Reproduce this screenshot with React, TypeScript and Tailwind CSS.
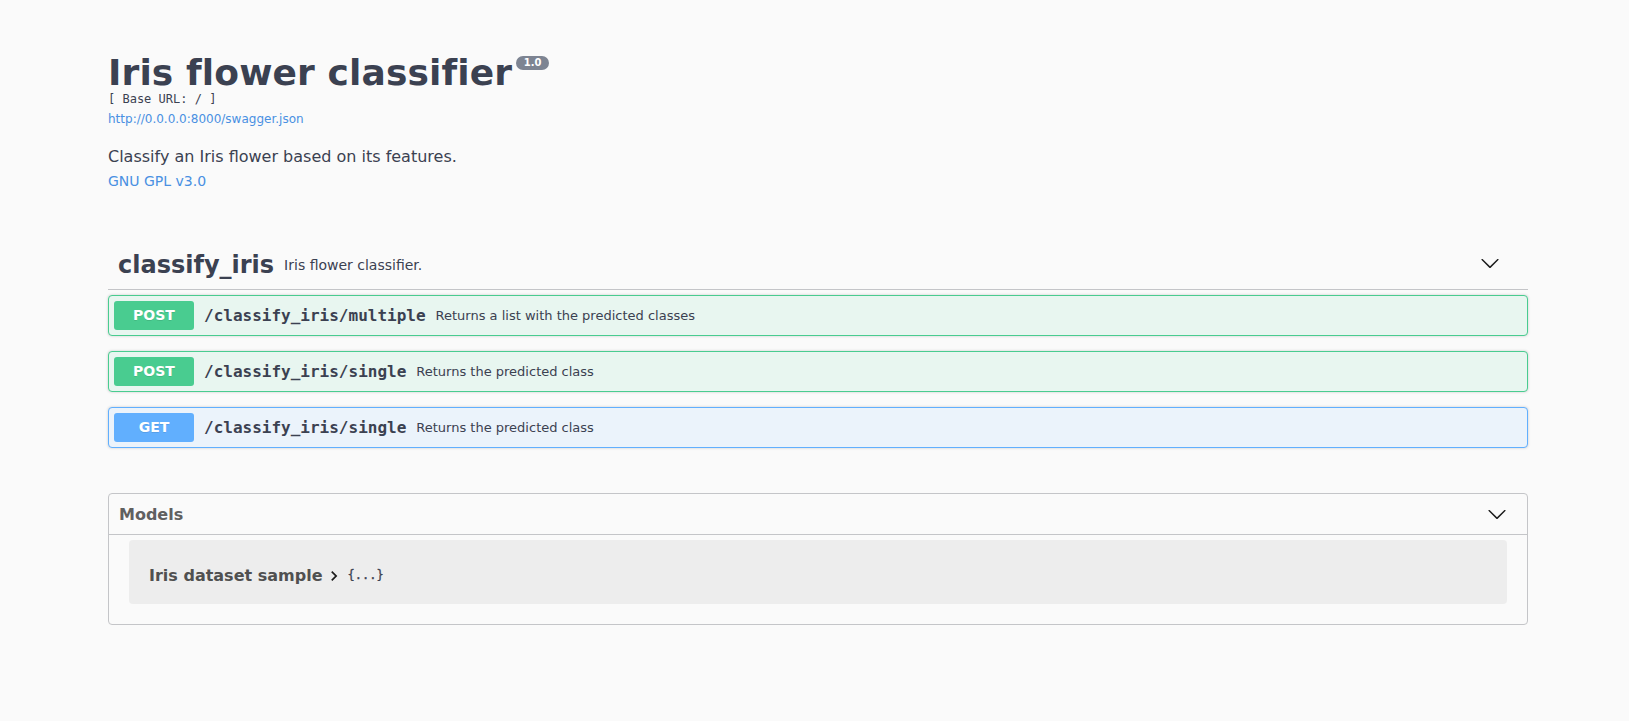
import React from "react";

const SANS = { fontFamily: '"DejaVu Sans", sans-serif' } as const;

function Arrow({ className = "" }: { className?: string }) {
  return (
    <svg width="20" height="20" viewBox="0 0 20 20" className={className} aria-hidden="true">
      <path
        fill="#1b1b1b"
        d="M17.418 6.109c.272-.268.709-.268.979 0s.271.701 0 .969l-7.908 7.83c-.27.268-.707.268-.979 0l-7.908-7.83c-.27-.268-.27-.701 0-.969.271-.268.709-.268.979 0L10 13.25l7.418-7.141z"
      />
    </svg>
  );
}

type Op = { method: "POST" | "GET"; path: string; desc: string };

const ops: Op[] = [
  { method: "POST", path: "/classify_iris/multiple", desc: "Returns a list with the predicted classes" },
  { method: "POST", path: "/classify_iris/single", desc: "Returns the predicted class" },
  { method: "GET", path: "/classify_iris/single", desc: "Returns the predicted class" },
];

function OpBlock({ op, last }: { op: Op; last: boolean }) {
  const isPost = op.method === "POST";
  return (
    <div
      className={`flex items-center rounded-[4px] border p-[5px] shadow-[0_0_3px_rgba(0,0,0,0.19)] ${
        isPost ? "border-[#49cc90] bg-[#e8f6f0]" : "border-[#61affe] bg-[#ebf3fb]"
      } ${last ? "" : "mb-[15px]"}`}
    >
      <span
        className={`flex h-[29px] w-[80px] items-center justify-center rounded-[3px] text-[14px] font-bold text-white [text-shadow:0_1px_0_rgba(0,0,0,0.1)] ${
          isPost ? "bg-[#49cc90]" : "bg-[#61affe]"
        }`}
        style={SANS}
      >
        {op.method}
      </span>
      <span className="px-[10px] font-['DejaVu_Sans_Mono',monospace] text-[16px] font-bold text-[#3b4151]">
        {op.path}
      </span>
      <span className="text-[13px] text-[#3b4151]" style={SANS}>
        {op.desc}
      </span>
    </div>
  );
}

export default function App() {
  return (
    <div className="min-h-screen bg-[#fafafa] text-[#3b4151]" style={SANS}>
      <div className="ml-[108px] w-[1420px]">
        {/* Info */}
        <div className="pt-[50px]">
          <h2 className="flex items-start text-[36px] font-bold leading-[42px] text-[#3b4151]">
            <span className="translate-y-[2px] tracking-[0.12px]">Iris flower classifier</span>
            <span className="ml-[4px] mt-[6px] flex h-[14px] w-[33px] items-center justify-center rounded-full bg-[#7d8492] text-[10px] font-bold leading-[14px] text-white">
              1.0
            </span>
          </h2>
          <div className="font-['DejaVu_Sans_Mono',monospace] text-[12px] leading-[14px] text-[#3b4151]">
            [ Base URL: / ]
          </div>
          <div className="mt-[6px] text-[12px] leading-[14px]">
            <a className="text-[#4990e2]">http://0.0.0.0:8000/swagger.json</a>
          </div>
          <p className="mt-[21px] text-[16px] leading-[19px] text-[#3b4151]">
            Classify an Iris flower based on its features.
          </p>
          <div className="mt-[7px] text-[14px] leading-[16px]">
            <a className="text-[#4990e2]">GNU GPL v3.0</a>
          </div>
        </div>

        {/* Tag section */}
        <div className="mt-[52px]">
          <div className="mb-[5px] flex items-center border-b border-[#c4c5c8] py-[10px] pl-[10px] pr-[28px]">
            <span className="text-[24px] font-bold leading-[28px] text-[#3b4151]">classify_iris</span>
            <span className="flex-1 px-[10px] text-[14px] text-[#3b4151]">Iris flower classifier.</span>
            <Arrow className="-translate-y-[2px]" />
          </div>
          {ops.map((op, i) => (
            <OpBlock key={i} op={op} last={i === ops.length - 1} />
          ))}
        </div>

        {/* Models */}
        <div className="mt-[45px] rounded-[4px] border border-[#c4c5c8]">
          <div className="flex items-center border-b border-[#c4c5c8] py-[10px] pl-[10px] pr-[20px]">
            <span className="flex-1 text-[16px] font-bold leading-[19px] text-[#606060]">Models</span>
            <Arrow />
          </div>
          <div className="mx-[20px] mb-[20px] mt-[5px] h-[64px] rounded-[4px] bg-[#ededed] pl-[20px] pt-[25px]">
            <div className="flex items-center leading-[19px]">
              <span className="text-[16px] font-bold text-[#505050]">Iris dataset sample</span>
              <svg width="20" height="20" viewBox="0 0 24 24" className="ml-[1px] translate-y-[1px]" aria-hidden="true">
                <path fill="#1b1b1b" d="M10 6L8.59 7.41 13.17 12l-4.58 4.59L10 18l6-6z" />
              </svg>
              <span className="ml-[4px] font-['DejaVu_Sans_Mono',monospace] text-[12px] text-[#3b4151] [-webkit-text-stroke:0.3px_#3b4151]">
                {"{...}"}
              </span>
            </div>
          </div>
        </div>
      </div>
    </div>
  );
}
